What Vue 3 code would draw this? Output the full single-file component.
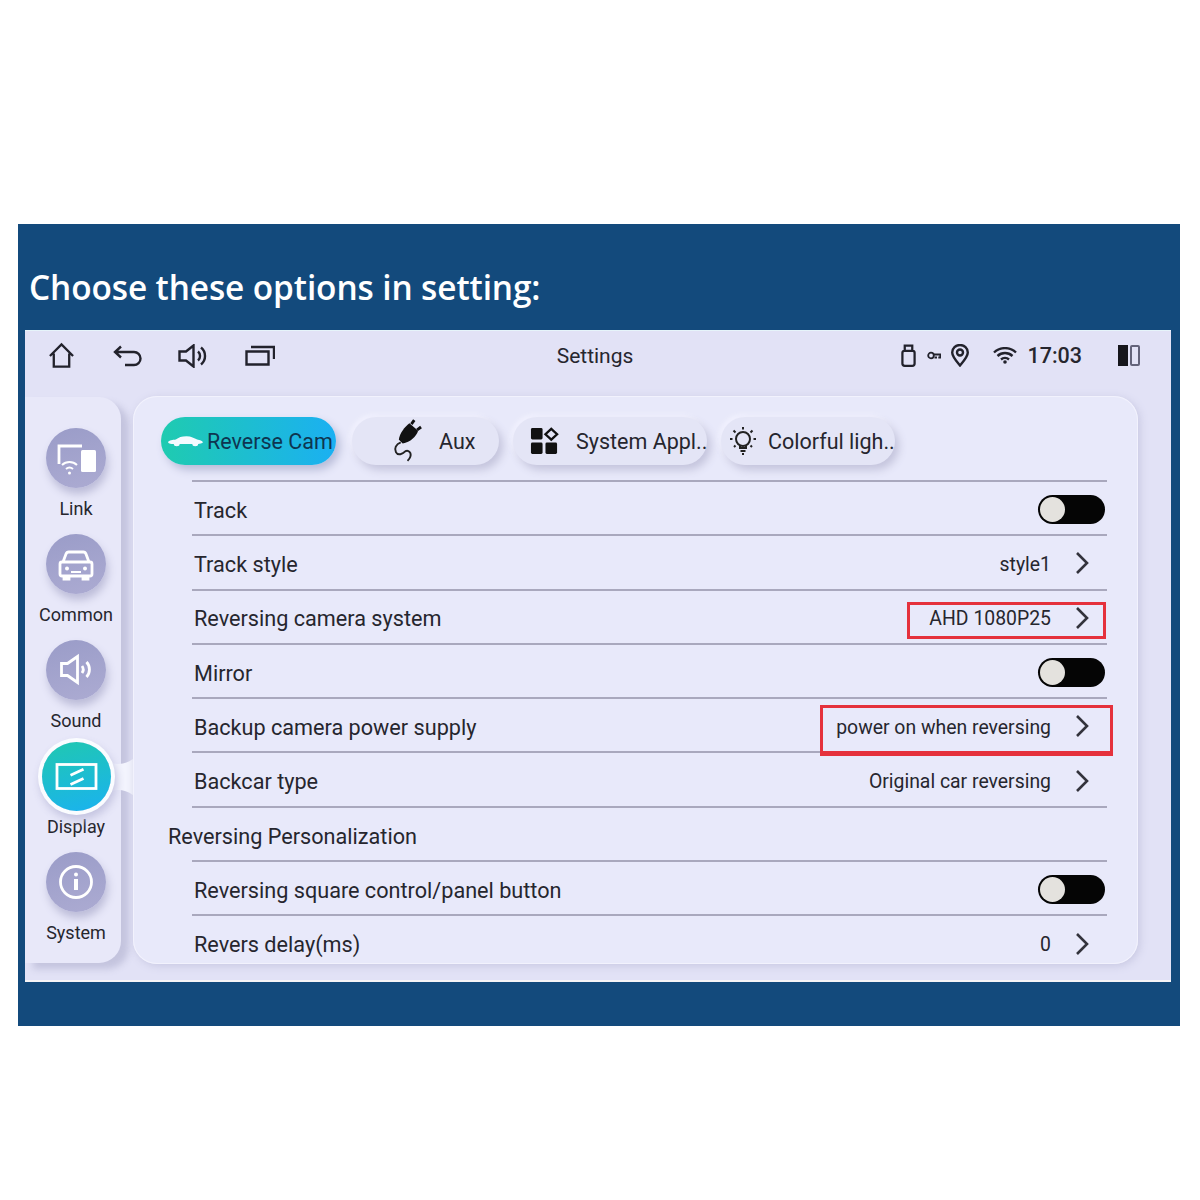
<template>
  <div class="page">
    <div class="banner">
      <h1 class="title">Choose these options in setting:</h1>
      <div class="screen">
        <header class="topbar">
          <div class="top-left">
            <svg class="ic home" viewBox="0 0 28 28"><path d="M2 14.500 14 2.500l12 12M6 12v13.500h16V12" /></svg>
            <svg class="ic back" viewBox="0 0 30 22"><path d="M8 1.500 2 7l6 5.500M2 7h19a6.500 6.500 0 0 1 0 13h-9" /></svg>
            <svg class="ic speaker" viewBox="0 0 31 24"><path d="M1.500 7.500h6.500L15.500 1.500v21L8 16.500H1.500zM20 7.500a6 6 0 0 1 0 9M23 3.500a11 11 0 0 1 0 17" /></svg>
            <svg class="ic recents" viewBox="0 0 30 21"><path d="M1.500 6.500h22v13h-22zM6 2h23v12" /></svg>
          </div>
          <div class="top-title">Settings</div>
          <div class="top-right">
            <svg class="ic usb" viewBox="0 0 16 24"><path d="M1.500 9a2 2 0 0 1 2-2h9a2 2 0 0 1 2 2v11.500a2.500 2.500 0 0 1-2.500 2.500H4a2.500 2.500 0 0 1-2.500-2.500zM4 7V1.500h8V7" /></svg>
            <svg class="ic key" viewBox="0 0 14 9"><circle cx="4" cy="4.500" r="2.800" /><path d="M6.800 3.500h6.500v3h-2M10 6.500H7.500" /></svg>
            <svg class="ic pin" viewBox="0 0 18 23"><path d="M9 21.500C4.500 16 1.200 12.500 1.200 8.500a7.800 7.500 0 0 1 15.600 0c0 4-3.300 7.500-7.800 13z" /><circle cx="9" cy="8.500" r="3" /></svg>
            <svg class="ic wifi" viewBox="0 0 24 17"><path d="M1 5.500a16 16 0 0 1 22 0M4.500 9a11 11 0 0 1 15 0M8 12.500a6 6 0 0 1 8 0" /><circle class="solid" cx="12" cy="15" r="1.800" /></svg>
            <span class="clock">17:03</span>
            <div class="split"><i></i><b></b></div>
          </div>
        </header>

        <div class="body">
          <aside class="side">
            <div v-for="item in sideItems" :key="item.name" class="side-item" :class="{ active: item.active }">
              <div class="bubble">
                <svg v-if="item.name === 'Link'" viewBox="0 0 60 60"><path class="w" d="M36 18H13v18" /><rect class="f" x="35" y="22" width="15" height="22" rx="1.500" /><path class="w thin" d="M16 37a11 11 0 0 1 15 0M20 41a5.500 5.500 0 0 1 7 0" /><circle class="f" cx="23.500" cy="45" r="1.500" /></svg>
                <svg v-else-if="item.name === 'Common'" viewBox="0 0 60 60"><path class="w" d="M17 28l3-8a3 3 0 0 1 3-2h14a3 3 0 0 1 3 2l3 8M16 28h28a2 2 0 0 1 2 2v10a2 2 0 0 1-2 2H16a2 2 0 0 1-2-2V30a2 2 0 0 1 2-2zM18 42v3h5v-3M37 42v3h5v-3" /><circle class="f" cx="21" cy="34.500" r="2" /><circle class="f" cx="39" cy="34.500" r="2" /><path class="w thin" d="M25 38h10" /></svg>
                <svg v-else-if="item.name === 'Sound'" viewBox="0 0 60 60"><path class="w" d="M15.500 23.500h6l10-7v26l-10-7h-6zM36 26a6 6 0 0 1 0 7M40.500 22a11 11 0 0 1 0 15" /></svg>
                <svg v-else-if="item.name === 'Display'" viewBox="0 0 69 69"><rect class="w" x="15" y="22.500" width="39" height="24" /><path class="w" d="M28.500 33.200l13-6M28.500 42.500l13-6" /></svg>
                <svg v-else viewBox="0 0 60 60"><circle class="w" cx="30" cy="30" r="15.500" /><circle class="f" cx="30" cy="22.500" r="2" /><path class="w bold" d="M30 27v11" /></svg>
              </div>
              <span class="side-label">{{ item.name }}</span>
            </div>
            <svg class="notch" viewBox="0 0 28 36" preserveAspectRatio="none"><path d="M0 0C7 6 18 7 28 0V36C18 29 7 30 0 36Z" /></svg>
          </aside>

          <main class="panel">
            <div class="tabs">
              <div class="tab on tab1">
                <svg class="t-car" viewBox="0 0 38 16" preserveAspectRatio="none"><path d="M1 9.500c1-2.500 5-3 8-3.500 3-3 6-4.500 11-4.500s8 2.500 11 4.500c3 .5 5 2 6 3.500-1 1.500-3 2-5 2.500a3 3 0 0 1-6 0H13a3 3 0 0 1-6 0c-3 0-5-.5-6-2.500z" /></svg>
                <span>Reverse Cam</span>
              </div>
              <div class="tab tab2">
                <svg class="t-plug" viewBox="0 0 30 46"><path class="s" d="M19 5l3-4M25 11l4-3" /><path class="p" d="M17 4l9 8c-2 6-8 12-16 13l-4-4c1-7 6-13 11-17z" /><path class="c" d="M8 24C3 26 1 30 3 34c2 4 7 2 10-1 2-1 4 0 5 2 1 3 0 5-3 8" /></svg>
                <span>Aux</span>
              </div>
              <div class="tab tab3">
                <svg class="t-apps" viewBox="0 0 30 30"><rect x="1" y="1" width="12" height="12" rx="1.500" /><rect x="1" y="16" width="12" height="12" rx="1.500" /><rect x="16" y="16" width="12" height="12" rx="1.500" /><path class="o" d="M22 2l6 5.500-6 5.500-6-5.500z" /></svg>
                <span>System Appl..</span>
              </div>
              <div class="tab tab4">
                <svg class="t-bulb" viewBox="0 0 28 30"><circle cx="14" cy="13" r="7" /><path d="M11 20v2h6v-2M11.500 25h5M13 28h2M14 1v2.500M4.500 4.500l2 2M23.500 4.500l-2 2M1 13h2.500M24.500 13H27M5 21l1.500-1.500M23 21l-1.500-1.500" /></svg>
                <span>Colorful ligh..</span>
              </div>
            </div>

            <div class="list">
              <div v-for="row in rows" :key="row.label" class="row" :class="{ heading: row.heading }">
                <span class="row-label">{{ row.label }}</span>
                <div v-if="row.toggle" class="toggle"><i></i></div>
                <div v-else-if="row.value !== undefined" class="row-value">
                  <span>{{ row.value }}</span>
                  <svg class="chev" viewBox="0 0 14 24"><path d="M2 2l10 10L2 22" /></svg>
                </div>
                <div v-if="row.mark" class="mark" :class="row.mark"></div>
              </div>
            </div>
          </main>
        </div>
      </div>
    </div>
  </div>
</template>

<script setup>
const sideItems = [
  { name: "Link" },
  { name: "Common" },
  { name: "Sound" },
  { name: "Display", active: true },
  { name: "System" },
];

const rows = [
  { label: "Track", toggle: true },
  { label: "Track style", value: "style1" },
  { label: "Reversing camera system", value: "AHD 1080P25", mark: "mark-a" },
  { label: "Mirror", toggle: true },
  { label: "Backup camera power supply", value: "power on when reversing", mark: "mark-b" },
  { label: "Backcar type", value: "Original car reversing" },
  { label: "Reversing Personalization", heading: true },
  { label: "Reversing square control/panel button", toggle: true },
  { label: "Revers delay(ms)", value: "0" },
];
</script>

<style>
html,
body {
  background: #fff;
}
</style>

<style scoped>
.page {
  height: 1200px;
  padding: 224px 0 0 18px;
  box-sizing: border-box;
  font-family: Roboto, "Liberation Sans", sans-serif;
  color: #26262e;
}

.banner {
  width: 1162px;
  height: 802px;
  background: #134a7c;
  padding-left: 7px;
  box-sizing: border-box;
}

.title {
  margin: 0 0 0 4px;
  height: 106px;
  padding-top: 40px;
  box-sizing: border-box;
  font-family: "Open Sans", sans-serif;
  font-size: 33.400px;
  line-height: 46px;
  font-weight: 600;
  letter-spacing: -0.1px;
  color: #fff;
}

.screen {
  width: 1146px;
  height: 652px;
  background: #e2e2f6;
  box-shadow: inset 0 -2px #f6f4f6, inset 0 1px #e6f4fa;
  display: flex;
  flex-direction: column;
}

.topbar {
  height: 66px;
  flex: none;
  display: flex;
  align-items: center;
  padding: 0 31px 15px 23px;
  box-sizing: border-box;
}

.top-left,
.top-right {
  flex: 1;
  display: flex;
  align-items: center;
}

.top-right {
  justify-content: flex-end;
}

.top-title {
  font-size: 21px;
  margin-left: 2px;
}

.ic {
  fill: none;
  stroke: #22222c;
  stroke-width: 2.400;
  flex: none;
}

.home {
  width: 27px;
  height: 27px;
}

.back {
  width: 30px;
  height: 22px;
  margin-left: 38px;
}

.speaker {
  width: 31px;
  height: 24px;
  margin-left: 35px;
}

.recents {
  width: 30px;
  height: 21px;
  margin-left: 36px;
}

.usb {
  width: 15px;
  height: 23px;
}

.key {
  width: 14px;
  height: 9px;
  margin-left: 11px;
  stroke-width: 1.800;
}

.pin {
  width: 18px;
  height: 23px;
  margin-left: 10px;
}

.wifi {
  width: 24px;
  height: 17px;
  margin-left: 24px;
}

.wifi .solid {
  fill: #22222c;
  stroke: none;
}

.clock {
  margin-left: 10px;
  font-size: 21.500px;
  font-weight: 500;
}

.split {
  margin-left: 36px;
  display: flex;
  gap: 2px;
  width: 22px;
  height: 21px;
}

.split i {
  width: 10px;
  background: #16161c;
}

.split b {
  width: 10px;
  box-sizing: border-box;
  border: 2px solid #63637a;
  border-radius: 2px;
}

.body {
  flex: 1;
  min-height: 0;
  display: flex;
  align-items: flex-start;
  gap: 12px;
}

.side {
  position: relative;
  width: 96px;
  height: 566px;
  margin-top: 1px;
  background: #e8e8f9;
  border-radius: 0 22px 22px 0;
  box-shadow: 8px 6px 7px #c4c4de;
  display: flex;
  flex-direction: column;
  padding: 31px 0 0 6px;
  box-sizing: border-box;
}

.side-item {
  height: 106px;
  display: flex;
  flex-direction: column;
  align-items: center;
  flex: none;
}

.bubble {
  width: 60px;
  height: 60px;
  border-radius: 50%;
  background: linear-gradient(165deg, #9a9cc8, #acabd2);
  box-shadow: 2px 6px 9px #bcbcd8;
  flex: none;
}

.bubble svg {
  display: block;
  width: 100%;
  height: 100%;
}

.bubble .w {
  fill: none;
  stroke: #fff;
  stroke-width: 2.800;
}

.bubble .thin {
  stroke-width: 2;
}

.bubble .bold {
  stroke-width: 4;
}

.bubble .f {
  fill: #fff;
}

.side-label {
  margin-top: 10px;
  font-size: 18px;
  line-height: 21px;
}

.active .bubble {
  width: 69px;
  height: 69px;
  margin: -4.500px 0;
  background: linear-gradient(165deg, #20c8b0, #1ab2f0);
  box-shadow: 0 0 0 4px #fafcff, 2px 5px 8px 4px #c4c4e0;
  position: relative;
  z-index: 1;
}

.notch {
  position: absolute;
  left: 80px;
  top: 362px;
  width: 28px;
  height: 36px;
  fill: #f3f4fd;
}

.panel {
  position: relative;
  width: 1005px;
  height: 568px;
  background: #e8e9fa;
  border-radius: 24px;
  box-shadow: inset 0 0 0 1px #f2f2fd, 2px 2px 8px #c8c8e2;
  padding: 21px 0 0 28px;
  box-sizing: border-box;
  overflow: hidden;
}

.tabs {
  display: flex;
  height: 48px;
  gap: 14px;
  margin-bottom: 15px;
}

.tab {
  height: 48px;
  border-radius: 24px;
  background: #e4e5f6;
  box-shadow: 4px 5px 8px #c4c4dc, -2px -2px 5px #f4f4ff;
  display: flex;
  align-items: center;
  flex: none;
  font-size: 21.500px;
  white-space: nowrap;
  box-sizing: border-box;
}

.tab1 {
  width: 175px;
  padding-left: 6px;
  margin-right: 2px;
  background: linear-gradient(90deg, #1fcbb0, #1bb0f2);
  color: #0e3550;
  box-shadow: 4px 5px 8px #b8bcd8;
}

.t-car {
  width: 37px;
  height: 12px;
  fill: #f4faff;
  margin-right: 3px;
  flex: none;
}

.tab2 {
  width: 147px;
  padding-left: 41px;
}

.t-plug {
  width: 29px;
  height: 45px;
  margin-right: 17px;
  flex: none;
}

.t-plug .p {
  fill: #111;
}

.t-plug .s {
  fill: none;
  stroke: #111;
  stroke-width: 3;
}

.t-plug .c {
  fill: none;
  stroke: #222;
  stroke-width: 2;
}

.tab3 {
  width: 194px;
  padding-left: 17px;
}

.t-apps {
  width: 29px;
  height: 29px;
  margin-right: 17px;
  fill: #111;
  flex: none;
}

.t-apps .o {
  fill: none;
  stroke: #111;
  stroke-width: 2.400;
}

.tab4 {
  width: 174px;
  padding-left: 8px;
}

.t-bulb {
  width: 28px;
  height: 30px;
  margin-right: 11px;
  fill: none;
  stroke: #222;
  stroke-width: 2;
  flex: none;
}

.list {
  width: 915px;
  margin-left: 31px;
  border-top: 2px solid #a9a8bd;
}

.row {
  position: relative;
  height: 54.300px;
  box-sizing: border-box;
  border-bottom: 2px solid #a9a8bd;
  display: flex;
  align-items: center;
  justify-content: space-between;
  padding: 2px 0 0 2px;
  font-size: 21.650px;
}

.row-label {
  margin-top: 2px;
}

.heading {
  padding-left: 0;
}

.heading .row-label {
  margin: 4px 0 0 -24px;
}

.row-value {
  display: flex;
  align-items: center;
  font-size: 19.400px;
  padding-right: 18px;
}

.row-value span {
  margin-top: 2px;
}

.chev {
  width: 14px;
  height: 24px;
  margin-left: 24px;
  fill: none;
  stroke: #33333c;
  stroke-width: 2.600;
}

.toggle {
  width: 67px;
  height: 29px;
  margin-right: 2px;
  border-radius: 15px;
  background: #050505;
  display: flex;
  align-items: center;
  padding-left: 2px;
  box-sizing: border-box;
}

.toggle i {
  width: 25px;
  height: 25px;
  border-radius: 50%;
  background: #e4e2de;
}

.mark {
  position: absolute;
  box-sizing: border-box;
  border: 3px solid #e5313c;
}

.mark-a {
  left: 715px;
  top: 11px;
  width: 199px;
  height: 37px;
}

.mark-b {
  left: 628px;
  top: 6px;
  width: 293px;
  height: 51px;
  border-bottom-width: 5px;
}
</style>
